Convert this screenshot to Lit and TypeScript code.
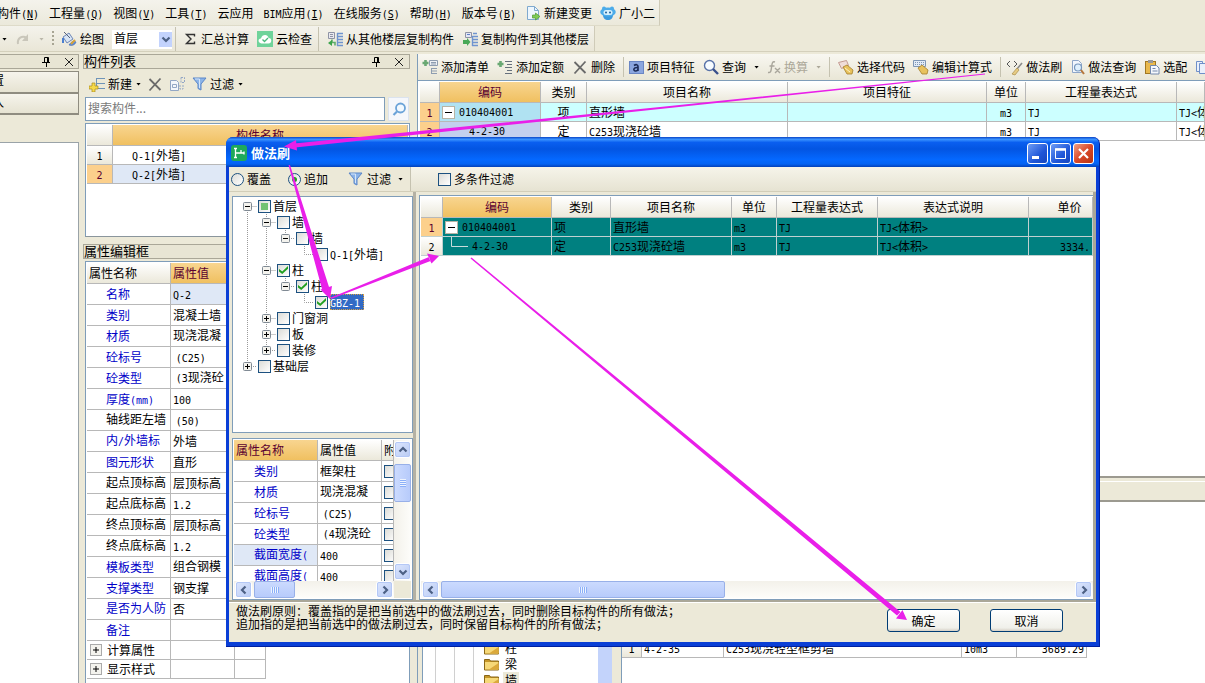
import { LitElement, html, svg, css, nothing, type TemplateResult } from 'lit';
import { customElement } from 'lit/decorators.js';
import { classMap } from 'lit/directives/class-map.js';

/* Latin runs are set in a half-width face so that they line up with the full-width characters. */
const t = (s: string) =>
  s.split(/([\x21-\x7e]+)/).filter((p) => p).map((p) => (/^[\x21-\x7e]/.test(p) ? html`<span class="l">${p}</span>` : p));

const shared = css`
  * { box-sizing: border-box; }
  button { font: inherit; color: inherit; background: none; border: 0; padding: 0; margin: 0; white-space: nowrap; }
  svg { display: block; flex: none; }
  .l { font-family: "DejaVu Sans Mono", "Liberation Mono", monospace; font-size: 10px; line-height: 1; }
  .tb { display: flex; align-items: center; gap: 3px; flex: none; }
  .tb.off { color: #aca899; }
  .caret { width: 5px; height: 3px; background: currentColor; clip-path: polygon(0 0, 100% 0, 50% 100%); margin-left: 5px; flex: none; }
  .sep { width: 1px; align-self: stretch; background: #c5c2b0; flex: none; }
  table { border-collapse: separate; border-spacing: 0; table-layout: fixed; width: 100%; }
  th, td { border-right: 1px solid #b8b8b8; border-bottom: 1px solid #b8b8b8; height: 19px; padding: 0 2px; font-weight: normal; text-align: left; white-space: nowrap; overflow: hidden; line-height: 16px; }
  th { height: 21px; background: linear-gradient(#fff, #ebe8da); padding: 0; text-align: center; }
  th.hot { background: linear-gradient(#f8d590, #f0c060); color: #5a0030; }
  th.left { text-align: left; padding-left: 2px; }
  td.num { background: linear-gradient(#fff, #ebe8da); text-align: center; padding: 0; }
  td.num.hot { background: #fcd08c; color: #5a0030; }
  td.c { text-align: center; }
  td.r { text-align: right; }
  .tall td { height: 21px; }
  .tall td.high { padding-bottom: 3px; }
  .name { color: #0000c8; }
  .name.plain { color: #000; }
  .code { display: flex; align-items: center; gap: 4px; }
  .code .l { padding-top: 2px; }
  .fold { width: 13px; height: 13px; flex: none; background: #fff; border: 1px solid #b8b4a4; display: flex; align-items: center; justify-content: center; }
  .fold::before { content: ""; width: 7px; height: 1px; background: #000; }
  input[type="checkbox"] { appearance: none; margin: 0; width: 13px; height: 13px; flex: none; border: 1px solid #1c5180; background: linear-gradient(135deg, #dcdcd7, #fff); display: grid; place-items: center; }
  input[type="checkbox"]:checked::after { content: ""; width: 9px; height: 8px; background: #21a121; clip-path: polygon(0 38%, 36% 68%, 100% 0, 100% 35%, 36% 100%, 0 68%); }
  input[type="checkbox"].part::after { content: ""; width: 7px; height: 7px; background: #73c373; }
`;

const ic = (body: TemplateResult, w = 16, h = 16) =>
  html`<svg width=${w} height=${h} viewBox="0 0 ${w} ${h}" fill="none" aria-hidden="true">${body}</svg>`;

const icons = {
  redo: ic(svg`<path d="M2 12C1 6 6 3 11 6" stroke="#c9c6ba" stroke-width="2"/><path d="M12 2v7H6z" fill="#c9c6ba"/>`, 14, 14),
  draw: ic(svg`<path d="M2 6l6-4 4 6-6 4z" fill="#d7e4f5" stroke="#6f87b5"/><path d="M3 1l6 6" stroke="#55617a"/><path d="M2 7v5" stroke="#4b7fd0" stroke-width="2"/><path d="M8 14c2-3 5-5 7-3-1 3-4 4-7 3z" fill="#5f8fdd" stroke="#3a62aa" stroke-width=".6"/><path d="M14 9l-4 4" stroke="#d7a33a" stroke-width="2"/>`),
  sigma: ic(svg`<path d="M10.500 5.500V3.500H2.500l4.500 4.500-4.500 4.500h8v-2" stroke="#333" stroke-width="1.400"/>`, 14, 16),
  cloudCheck: ic(svg`<rect width="16" height="16" fill="#6fd39a"/><path d="M4.500 12.500C0 11.500 1.500 7 4 7.500 5 3 11 3 11.500 7 15.500 7 15 12.500 11.500 12.500z" fill="#fff"/><path d="M5.500 8.500l2 2 3.500-3.500" stroke="#49b97a" stroke-width="1.300"/>`),
  copyFrom: ic(svg`<path d="M1.500 1.500h6v6h-6z" fill="#e9e9ef" stroke="#8f93a5"/><path d="M3 3.500h3M3 5.500h3" stroke="#8f93a5"/><path d="M10.500 2v13M10 2.500h6M10 5.500h6M10 8.500h6M10 11.500h6M10 14.500h6" stroke="#6f94cf" stroke-width="1.400"/><path d="M5 8.500v3M5 11.500h3v3" stroke="#5fae6a" stroke-width="1.600"/><path d="M1 12l4-3v6z" fill="#3ba34a"/>`),
  copyTo: ic(svg`<path d="M3.500 1.500h6v5h-6z" fill="#e3e6f4" stroke="#8f93a5"/><path d="M5 3.500h3" stroke="#5f7fc5"/><path d="M10.500 5v10M10 5.500h6M10 8.500h6M10 11.500h6M10 14.500h6M11 2.500h4" stroke="#6f94cf" stroke-width="1.400"/><path d="M1 9h4V7l3.500 4L5 15v-2H1z" fill="#49a857"/>`),
  newDoc: ic(svg`<path d="M1.500 1.500h7l4 4v9h-11z" fill="#edf6fd" stroke="#7fa9cf"/><path d="M8.500 1.500v4h4" stroke="#7fa9cf"/><path d="M6.500 10h3V8l4.500 3.500L9.500 15v-2h-3z" fill="#7ecb55" stroke="#4f9a33" stroke-width=".7"/>`, 15, 16),
  mascot: ic(svg`<path d="M3 10c0 3 2 5 5 5s5-2 5-5z" fill="#3b9ade"/><ellipse cx="8" cy="7" rx="7.800" ry="4.500" fill="#4cacea"/><circle cx="4" cy="3.500" r="2" fill="#4cacea"/><circle cx="12" cy="3.500" r="2" fill="#4cacea"/><rect x="3.500" y="5" width="9" height="5" rx="2.500" fill="#d5f0fd"/><circle cx="6" cy="7.500" r="1" fill="#1d5f9e"/><circle cx="10" cy="7.500" r="1" fill="#1d5f9e"/>`),
  pin: ic(svg`<path d="M3.500 1.500h4v5h-4zM1 6.500h8M5.500 7v4M6.500 2v4" stroke="#000"/>`, 10, 12),
  close: ic(svg`<path d="M1 1l8 8M9 1l-8 8" stroke="#222"/>`, 10, 10),
  create: ic(svg`<path d="M7 2.500h9M7 7.500h9M7 12.500h9M7.500 2v11" stroke="#6f94b8"/><path d="M3 7h3v3h3v3H6v3H3v-3H0v-3h3z" fill="#f5d94b" stroke="#a98a1e" stroke-width=".7"/>`),
  cross: ic(svg`<path d="M2.500 2l11 11M13.500 1.500l-11 12" stroke="#6a6a6a" stroke-width="1.800"/>`, 16, 15),
  copy: ic(svg`<path d="M1.500 4.500h6l2 2v8h-8z" fill="#f4f7fb" stroke="#93a7c5"/><path d="M3.500 8.500h4v3h-4z" stroke="#93a7c5"/><path d="M12 1.500h3.500v5H12zM11 9v4h3V9" stroke="#93a7c5" stroke-dasharray="2 1"/>`, 17, 16),
  funnel: ic(svg`<path d="M1 2h13L9 8v6l-3-1.500V8z" fill="#8cb4e8" stroke="#5a86c8"/><path d="M3 3h4.500L7.500 8v4" stroke="#d5e6fa"/>`, 15, 16),
  find: ic(svg`<circle cx="8.500" cy="6" r="4.500" fill="#f2f9ff" stroke="#6ba3d8" stroke-width="1.800"/><path d="M5 9.500L1.500 13" stroke="#6ba3d8" stroke-width="2.200"/>`, 14, 15),
  addList: ic(svg`<path d="M3.500 1v6M.5 4h6" stroke="#69a873" stroke-width="2.600"/><path d="M7.500 1.500h8v5h-8z" fill="#eef1f5" stroke="#8e9db0"/><path d="M9 3.500h5M9 5h5M9 9.500h6M9 12h6M9 14.500h6M9.500 9v6" stroke="#8e9db0"/>`),
  addItem: ic(svg`<path d="M3.500 2v6M.5 5h6" stroke="#69a873" stroke-width="2.600"/><path d="M8 2.500h7M10 5.500h5M8 8.500h7M10 11.500h5M8 14.500h7" stroke="#66707c"/>`),
  feature: ic(svg`<rect x=".5" y="1.500" width="14" height="12" fill="#8ba6df" stroke="#6a86c4"/><path d="M5 5.500c2-1.500 4-1 4 1V11M9 7.500c-5-.5-5 3.500-2.500 3.500C8 11 9 10 9 9" stroke="#1b2a55" stroke-width="1.600"/>`, 15, 15),
  query: ic(svg`<circle cx="6.500" cy="6.500" r="5" fill="#f6fbff" stroke="#5872a8" stroke-width="1.400"/><path d="M10 10l5 5" stroke="#39508c" stroke-width="2.400"/>`),
  fx: ic(svg`<path d="M8 2C5 1 5 4 4.500 7.500S4 13 1 12.500M2.500 6h5M8 8l5 5M13 8l-5 5" stroke="#a9a69c" stroke-width="1.400"/>`, 14, 15),
  pick: ic(svg`<path d="M.5 3.500l8-2 2 5-7 3z" fill="#f0ddd9" stroke="#c49a92"/><path d="M5 8l4-2 6 5-1 4H9z" fill="#e8c25d" stroke="#a57f2b" stroke-width=".8"/><path d="M7 9l5 4" stroke="#fff3c4"/>`),
  edit: ic(svg`<path d="M.5 1.500h12v6H.5z" fill="#e2ebf6" stroke="#7f97b5"/><path d="M2 3.500h9M2 5.500h9" stroke="#7f97b5" stroke-dasharray="1 1"/><path d="M5 9l4-3 6 5-1 4H9z" fill="#e8c25d" stroke="#a57f2b" stroke-width=".8"/>`),
  brush: ic(svg`<path d="M4 2L1 5l3 3M8 2l3 3-3 3" stroke="#555"/><path d="M16 4l-5 6" stroke="#8a8a8a" stroke-width="1.600"/><path d="M11 9l2 2-4 5-3-1z" fill="#e6cb83" stroke="#a98c4b" stroke-width=".7"/>`, 17, 17),
  docFind: ic(svg`<path d="M2.500 1.500h6l3 3v9h-9z" fill="#f1f6fd" stroke="#8ea6c9"/><circle cx="8" cy="8.500" r="3.500" fill="#dff0fd" stroke="#7797bd" stroke-width="1.200"/><path d="M11 11l3 4" stroke="#b5763c" stroke-width="2"/>`, 15, 16),
  paste: ic(svg`<rect x="1.500" y="2.500" width="10" height="12" fill="#e9b94d" stroke="#a17822"/><rect x="4" y="1" width="5" height="3" fill="#9a9a9a"/><path d="M6.500 6.500h6l2.500 2.500v6H6.500z" fill="#f5f8fd" stroke="#7288ab"/><path d="M8.500 9.500h3M8.500 12h5" stroke="#7288ab"/>`),
  sheet: ic(svg`<path d="M1.500 2.500h6v10h-6z" fill="#eaf0fb" stroke="#6f8fc9"/><path d="M4.500 4.500h8v10h-8z" fill="#eaf0fb" stroke="#6f8fc9"/>`),
  folder: ic(svg`<path d="M.5 2.500h5l1 1.500h8v9H.5z" fill="#c59628" stroke="#8a6716"/><path d="M1 5h13.500v7.500H1z" fill="#f6d878"/><path d="M14.500 6v6.500H5z" fill="#dba93b"/>`, 16, 14),
  app: ic(svg`<rect width="16" height="16" rx="3" fill="#1fa95b"/><path d="M4.500 3v10M4.500 8H13M10 8V5M3 3.500h3M3 12.500h3M13 6.500v3" stroke="#fff" stroke-width="1.300"/>`),
  left: ic(svg`<path d="M6.500 1.500L3 5l3.500 3.500" stroke="#4d6185" stroke-width="2.200"/>`, 10, 10),
  right: ic(svg`<path d="M3.500 1.500L7 5 3.500 8.500" stroke="#4d6185" stroke-width="2.200"/>`, 10, 10),
  up: ic(svg`<path d="M1.500 6.500L5 3l3.500 3.500" stroke="#4d6185" stroke-width="2.200"/>`, 10, 10),
  down: ic(svg`<path d="M1.500 3.500L5 7l3.500-3.500" stroke="#4d6185" stroke-width="2.200"/>`, 10, 10),
};

const caret = html`<span class="caret"></span>`;
const tool = (icon: TemplateResult, label: string, drop = false, off = false) =>
  html`<button class=${classMap({ tb: true, off })}>${icon}<span>${t(label)}</span>${drop ? caret : nothing}</button>`;

type Prop = { n: string; v: string; black?: boolean; nameHigh?: boolean; valueHigh?: boolean; lit?: 'n' | 'v' };

@customElement('scroll-bar')
class ScrollBar extends LitElement {
  static properties = { vertical: { type: Boolean, reflect: true } };
  declare vertical: boolean;
  static styles = [shared, css`
    :host { display: flex; height: 17px; background: linear-gradient(#f3f1ea, #fdfdfa); padding: 0 1px; gap: 1px; }
    :host([vertical]) { flex-direction: column; height: auto; width: 17px; padding: 1px 0; background: linear-gradient(90deg, #f3f1ea, #fdfdfa); }
    button { width: 17px; height: 17px; flex: none; display: grid; place-items: center; border: 1px solid #fff; outline: 1px solid #b4c8f6; outline-offset: -2px; border-radius: 3px; background: linear-gradient(135deg, #dce6fe, #b9cbf3); }
    .track { flex: 1; display: flex; flex-direction: inherit; padding: 0 1px; min-width: 0; min-height: 0; }
    :host([vertical]) .track { padding: 5px 0 0; }
    .thumb { width: var(--thumb, 50%); border: 1px solid #98b0e8; border-radius: 2px; background: linear-gradient(#cbdafe, #b7cbfb); display: grid; place-items: center; }
    :host([vertical]) .thumb { width: auto; height: var(--thumb, 50%); background: linear-gradient(90deg, #cbdafe, #b7cbfb); }
    .grip { width: 8px; height: 6px; background: repeating-linear-gradient(90deg, #eef4fe 0 1px, #8cb0f8 1px 2px); }
    :host([vertical]) .grip { width: 6px; height: 8px; background: repeating-linear-gradient(#eef4fe 0 1px, #8cb0f8 1px 2px); }
  `];
  render() {
    return html`
      <button aria-label="向前">${this.vertical ? icons.up : icons.left}</button>
      <div class="track"><div class="thumb"><span class="grip"></span></div></div>
      <button aria-label="向后">${this.vertical ? icons.down : icons.right}</button>`;
  }
}

type Node = { guides: string; join: 'down' | 'both' | 'up'; box: '+' | '-' | ''; label: string; state?: 'on' | 'part'; sel?: boolean };

const nodes: Node[] = [
  { guides: '', join: 'down', box: '-', label: '首层', state: 'part' },
  { guides: '|', join: 'both', box: '-', label: '墙' },
  { guides: '||', join: 'up', box: '-', label: '墙' },
  { guides: '|| ', join: 'up', box: '', label: 'Q-1[外墙]' },
  { guides: '|', join: 'both', box: '-', label: '柱', state: 'on' },
  { guides: '||', join: 'up', box: '-', label: '柱', state: 'on' },
  { guides: '|| ', join: 'up', box: '', label: 'GBZ-1', state: 'on', sel: true },
  { guides: '|', join: 'both', box: '+', label: '门窗洞' },
  { guides: '|', join: 'both', box: '+', label: '板' },
  { guides: '|', join: 'up', box: '+', label: '装修' },
  { guides: '', join: 'up', box: '+', label: '基础层' },
];

@customElement('brush-dialog')
class BrushDialog extends LitElement {
  static styles = [shared, css`
    :host { display: flex; flex-direction: column; background: #0a3fd6; border-radius: 7px 7px 0 0; padding: 0 3px 4px; border: solid #0020a0; border-width: 0 1px 1px 0; }
    .title { height: 30px; margin: 0 -3px; padding: 2px 5px 0; display: flex; align-items: center; gap: 4px; border-radius: 7px 7px 0 0; color: #fff; font-size: 13px; font-weight: bold; background: linear-gradient(#0a46c8, #3a93ff 8%, #0a5ff0 18%, #0355e2 40%, #0468ff 75%, #0462f2 90%, #0340b8); }
    .title h1 { font: inherit; margin: 0; flex: 1; }
    .win { width: 21px; height: 21px; border: 1px solid #fff; border-radius: 3px; background: linear-gradient(135deg, #6e9cf5, #1f56d8 60%, #1746bd); display: grid; place-items: center; }
    .win.x { background: linear-gradient(135deg, #f0a084, #d9492a 50%, #b9330f); }
    .controls { display: flex; gap: 2px; }
    .bar { height: 25px; display: flex; align-items: center; background: linear-gradient(#f6f4ea, #e6e3d2); border-bottom: 1px solid #d2ceb9; }
    .modes { width: 182px; align-self: stretch; display: flex; align-items: center; padding-left: 2px; background: #ece9d8; border-right: 1px solid #c5c2b0; }
    label { display: flex; align-items: center; gap: 3px; }
    .modes label { margin-right: 17px; }
    .modes .tb { margin-left: 3px; gap: 4px; }
    .modes .caret { margin-left: 3px; }
    input[type="radio"] { appearance: none; margin: 0; width: 13px; height: 13px; border: 1px solid #1c5180; border-radius: 50%; background: linear-gradient(135deg, #dcdcd7, #fff); display: grid; place-items: center; }
    input[type="radio"]:checked::after { content: ""; width: 5px; height: 5px; border-radius: 50%; background: #21a121; }
    .multi { margin-left: 27px; }
    .work { flex: 1; display: flex; min-height: 0; background: #ece9d8; border: solid #aaa798; border-width: 0 3px 2px 0; }
    .side { width: 187px; flex: none; padding: 4px 0 0 3px; border-right: 3px solid #b4b1a4; display: flex; flex-direction: column; gap: 5px; }
    .tree { height: 237px; background: #fff; border: 1px solid #7f9db9; padding: 1px 0 0 5px; }
    .node { display: flex; align-items: center; height: 16px; line-height: 16px; }
    .node label { gap: 2px; padding-left: 1px; }
    .node .sel { background: #316ac5; color: #fff; outline: 1px dotted #d8a040; outline-offset: -1px; padding: 0 4px 0 0; height: 16px; }
    .props { flex: 1; min-height: 0; background: #fff; border: 1px solid #7f9db9; display: grid; grid-template: 1fr 17px / 1fr 17px; padding: 1px; overflow: hidden; }
    .clip { overflow: hidden; min-height: 0; min-width: 0; }
    .clip td:last-child { padding-right: 0; }
    .corner { background: #ece9d8; }
    .vbar { --thumb: 38px; }
    .hbar { --thumb: 41px; }
    .main { flex: 1; min-width: 0; margin: 3px 0 0 3px; background: #fff; border: 1px solid #7f9db9; border-right: 0; padding: 1px 0 1px 1px; display: flex; flex-direction: column; }
    .main table { flex: none; }
    .main td { background: #008080; border-color: #c0d0d0; }
    .main td.num { background: linear-gradient(#fff, #ebe8da); }
    .main td.num.hot { background: #fcd08c; }
    .main td.code-cell { padding-left: 2px; }
    .fill { flex: 1; }
    .widebar { --thumb: 45%; }
    footer { height: 40px; background: #ece9d8; border-top: 1px solid #fff; display: flex; padding: 1px 33px 0 7px; gap: 30px; }
    footer p { margin: 0; flex: 1; line-height: 13px; white-space: nowrap; }
    .push { width: 73px; height: 23px; margin-top: 5px; border: 1px solid #003c74; border-radius: 3px; background: linear-gradient(#fff, #f0f0ea 85%, #d6d0c5); }
  `];

  private cell(kind: string, box: string) {
    const line = { '|': 'M9.5 0V16', down: 'M9.5 8V16M9.5 8.5H19', both: 'M9.5 0V16M9.5 8.5H19', up: 'M9.5 0V8.5H19' }[kind];
    return html`<svg width="19" height="16" viewBox="0 0 19 16" fill="none" aria-hidden="true">
      ${line ? svg`<path d=${line} stroke="#9a9a9a" stroke-dasharray="1 1"/>` : nothing}
      ${box ? svg`<rect x="5.500" y="4.500" width="8" height="8" rx="1" fill="#f4f3ee" stroke="#808a94"/><path d=${box === '+' ? 'M7 8.500h5M9.500 6v5' : 'M7 8.500h5'} stroke="#000"/>` : nothing}
    </svg>`;
  }

  private props: Prop[] = [
    { n: '类别', v: '框架柱' },
    { n: '材质', v: '现浇混凝', valueHigh: true },
    { n: '砼标号', v: ' (C25)' },
    { n: '砼类型', v: ' (4现浇砼', valueHigh: true },
    { n: '截面宽度(', v: '400', nameHigh: true, lit: 'n' },
    { n: '截面高度(', v: '400', nameHigh: true },
  ];

  render() {
    return html`
      <div class="title">${icons.app}<h1>做法刷</h1>
        <div class="controls">
          <button class="win" aria-label="最小化">${ic(svg`<path d="M2 11.500h7" stroke="#fff" stroke-width="3"/>`, 15, 15)}</button>
          <button class="win" aria-label="最大化">${ic(svg`<path d="M2.500 3h10v9.500h-10z" stroke="#fff"/><path d="M2 3.500h11" stroke="#fff" stroke-width="2.500"/>`, 15, 15)}</button>
          <button class="win x" aria-label="关闭">${ic(svg`<path d="M3 3l9 9M12 3l-9 9" stroke="#fff" stroke-width="2.200"/>`, 15, 15)}</button>
        </div>
      </div>
      <div class="bar">
        <div class="modes">
          <label><input type="radio" name="mode">覆盖</label>
          <label><input type="radio" name="mode" checked>追加</label>
          ${tool(icons.funnel, '过滤', true)}
        </div>
        <label class="multi"><input type="checkbox">多条件过滤</label>
      </div>
      <div class="work">
        <div class="side">
          <div class="tree">
            ${nodes.map((n) => html`<div class="node">
              ${[...n.guides].map((g) => this.cell(g, ''))}${this.cell(n.join, n.box)}
              <label><input type="checkbox" class=${n.state === 'part' ? 'part' : ''} ?checked=${n.state === 'on'}><span class=${n.sel ? 'sel' : ''}>${t(n.label)}</span></label>
            </div>`)}
          </div>
          <div class="props">
            <div class="clip">
              <table class="tall">
                <colgroup><col style="width:84px"><col style="width:64px"><col></colgroup>
                <tr><th class="hot left">属性名称</th><th class="left">属性值</th><th class="left">附</th></tr>
                ${this.props.map((p) => propRow(p, 'dlg'))}
              </table>
            </div>
            <scroll-bar class="vbar" vertical></scroll-bar>
            <scroll-bar class="hbar"></scroll-bar>
            <div class="corner"></div>
          </div>
        </div>
        <div class="main">
          <table>
            <colgroup><col style="width:22px"><col style="width:109px"><col style="width:59px"><col style="width:121px"><col style="width:45px"><col style="width:101px"><col><col style="width:64px"></colgroup>
            <tr><th></th><th class="hot">编码</th><th>类别</th><th>项目名称</th><th>单位</th><th>工程量表达式</th><th>表达式说明</th><th>&emsp;&ensp;单价</th></tr>
            <tr><td class="num hot">${t('1')}</td><td class="code-cell"><div class="code"><span class="fold"></span>${t('010404001')}</div></td><td>项</td><td>直形墙</td><td>${t('m3')}</td><td>${t('TJ')}</td><td>${t('TJ<体积>')}</td><td></td></tr>
            <tr><td class="num">${t('2')}</td><td class="code-cell"><div class="code">${ic(svg`<path d="M6.500 0V9.500H23" stroke="#c8dcdc"/>`, 23, 18)}${t('4-2-30')}</div></td><td>定</td><td>${t('C253现浇砼墙')}</td><td>${t('m3')}</td><td>${t('TJ')}</td><td>${t('TJ<体积>')}</td><td class="r">${t('3334.')}</td></tr>
          </table>
          <div class="fill"></div>
          <scroll-bar class="widebar"></scroll-bar>
        </div>
      </div>
      <footer>
        <p>做法刷原则：覆盖指的是把当前选中的做法刷过去，同时删除目标构件的所有做法；<br>追加指的是把当前选中的做法刷过去，同时保留目标构件的所有做法；</p>
        <button class="push">确定</button>
        <button class="push">取消</button>
      </footer>`;
  }
}

function propRow(p: Prop, kind: 'dlg' | 'panel') {
  return html`<tr>
    <td class=${classMap({ name: true, plain: !!p.black, high: !!p.nameHigh, lit: p.lit === 'n' })} style="padding-left:${kind === 'dlg' ? 20 : 19}px;${p.lit === 'n' ? 'background:#dfe8f6' : ''}">${t(p.n)}</td>
    <td class=${classMap({ high: !!p.valueHigh })} style=${p.lit === 'v' ? 'background:#dfe8f6' : ''}>${p.v.startsWith(' ') ? html`&nbsp;` : nothing}${t(p.v.trim())}</td>
    <td>${kind === 'dlg' ? html`<input type="checkbox" aria-label=${p.n}>` : nothing}</td></tr>`;
}

const wallProps: Prop[] = [
  { n: '名称', v: 'Q-2', lit: 'v' },
  { n: '类别', v: '混凝土墙' },
  { n: '材质', v: '现浇混凝', valueHigh: true },
  { n: '砼标号', v: ' (C25)' },
  { n: '砼类型', v: ' (3现浇砼', valueHigh: true },
  { n: '厚度(mm)', v: '100' },
  { n: '轴线距左墙', v: ' (50)', black: true, nameHigh: true },
  { n: '内/外墙标', v: '外墙', nameHigh: true },
  { n: '图元形状', v: '直形' },
  { n: '起点顶标高', v: '层顶标高', black: true, nameHigh: true },
  { n: '起点底标高', v: '1.2', black: true, nameHigh: true },
  { n: '终点顶标高', v: '层顶标高', black: true, nameHigh: true },
  { n: '终点底标高', v: '1.2', black: true, nameHigh: true },
  { n: '模板类型', v: '组合钢模', valueHigh: true },
  { n: '支撑类型', v: '钢支撑' },
  { n: '是否为人防', v: '否', nameHigh: true },
  { n: '备注', v: '' },
];

@customElement('app-root')
class AppRoot extends LitElement {
  static styles = [shared, css`
    :host { display: flex; flex-direction: column; position: relative; height: 100vh; overflow: hidden; background: #ece9d8; color: #000; font: 12px/16px "Noto Sans CJK SC", sans-serif; }
    .menu { height: 26px; width: 663px; display: flex; align-items: center; gap: 10px; margin-left: -3px; border-right: 1px solid #cfcbb8; border-bottom: 1px solid #dedbc9; background: linear-gradient(#f4f3ec, #ebe9db); white-space: nowrap; }
    .menu .tb:last-child { margin-left: -2px; }
    .key { text-decoration: underline; }
    .tools { height: 26px; width: 595px; display: flex; align-items: center; padding: 1px 0 1px 2px; border-right: 1px solid #cfcbb8; background: linear-gradient(#f4f3ec, #e9e6d6); }
    .tools .caret { margin: 0; }
    .tools .gray { color: #bab7aa; margin-left: 9px; }
    .tools .redo { margin-left: 9px; }
    .grip { width: 2px; height: 16px; margin: 0 7px 0 8px; background: repeating-linear-gradient(#a8a594 0 2px, transparent 2px 4px); }
    .combo { display: grid; width: 60px; height: 19px; background: #fff; margin: 0 3px 0 8px; }
    .combo > * { grid-area: 1 / 1; }
    .combo select { appearance: none; border: 0; background: none; font: inherit; padding: 0 0 0 2px; margin: 0; line-height: 16px; height: 17px; width: 60px; }
    .arrow { justify-self: end; align-self: center; width: 13px; height: 15px; background: #c3d3fd; display: grid; place-items: center; pointer-events: none; }
    .gap8 { margin-left: 8px; }
    .gap6 { margin-left: 6px; }
    .body { flex: 1; display: flex; min-height: 0; padding-top: 2px; border-top: 1px solid #d4d0bc; margin-top: -1px; }
    .panel-head { height: 15px; flex: none; display: flex; align-items: center; gap: 13px; padding-right: 5px; border: 1px solid #aaa798; background: #e8e5d4; }
    .panel-head h2 { font: inherit; font-size: 13px; line-height: 12px; height: 13px; margin: 0; flex: 1; }
    .strip { width: 79px; flex: none; display: flex; flex-direction: column; }
    .strip .panel-head { justify-content: flex-end; border-left: 0; padding-right: 4px; }
    .tab { height: 22px; margin-top: 2px; background: linear-gradient(#f6f4ec, #e6e3d2); border: solid #8f8c80; border-width: 1px 1px 1px 0; overflow: hidden; }
    .tab + .tab { margin-top: 0; border-bottom-width: 2px; }
    .tab span { margin-left: -8px; }
    .canvas { flex: 1; margin-top: 27px; background: #fff; border: solid #9aa3a8; border-width: 1px 1px 0 0; }
    .list { width: 327px; flex: none; margin-left: 4px; display: flex; flex-direction: column; }
    .list-tools { height: 26px; margin-top: 2px; display: flex; align-items: center; padding-left: 6px; gap: 6px; }
    .list-tools .caret { margin-left: 1px; }
    .search { display: flex; gap: 3px; margin-left: 2px; }
    .search input { width: 300px; height: 24px; border: 1px solid #7f9db9; padding: 0 2px 4px; font: inherit; background: #fff; }
    .search input::placeholder { color: #7a7a7a; opacity: 1; }
    .search button { width: 21px; height: 24px; display: grid; place-items: center; background: #f5f7fb; border: 1px solid #dbe3ee; }
    .box { margin-left: 2px; background: #fff; border: solid #7f9db9; border-width: 1px 1px 0 1px; padding: 1px; }
    .parts { height: 114px; flex: none; margin: 2px 0 7px 2px; border-bottom: 1px solid #8a959c; }
    .parts td.item { padding-left: 19px; }
    .parts tr:last-child td.item { background: #dfe8f6; }
    .attrs { flex: 1; min-height: 0; overflow: hidden; margin-top: 2px; }
    .attrs table { width: 179px; }
    .group td { height: 19px; }
    .group td:first-child { padding-left: 3px; }
    .group .row { display: flex; align-items: center; gap: 5px; }
    .content { flex: 1; min-width: 0; margin-left: 7px; display: flex; flex-direction: column; border-left: 1px solid #7f9db9; }
    .main-tools { height: 26px; flex: none; display: flex; align-items: center; gap: 8px; padding-left: 4px; overflow: hidden; background: linear-gradient(#f8f7f1, #e9e6d6); }
    .main-tools .sep { margin: 3px 0; }
    .main-tools .tight { margin-left: -3px; }
    .quota { flex: 1; background: #fff; border-top: 1px solid #7f9db9; padding: 1px 0 0 2px; overflow: hidden; }
    .quota .first td { background: #ccffff; }
    .quota .first td.code-cell { background: #b0e2f2; }
    .quota td.code-cell { background: #c3d0ee; }
    .quota td.num, .quota .first td.num { background: #fcd08c; }
    .quota tr td:nth-child(3) { text-align: center; }
    .indent { width: 23px; flex: none; }
    .splitter { height: 26px; flex: none; background: #ece9d8; border: solid #9c9a90; border-width: 2px 0; display: flex; flex-direction: column; padding-top: 3px; }
    .splitter::before { content: ""; height: 1px; background: #fff; }
    .lower { height: 181px; flex: none; display: flex; overflow: hidden; }
    .chapters { width: 190px; padding: 138px 0 0 28px; margin-left: 4px; background: repeating-linear-gradient(90deg, transparent 0 18px, #d0d0d0 18px 19px) -6px 0 / 66px no-repeat #fff; border-left: 1px solid #7f9db9; border-right: 14px solid #c3d3fb; }
    .leaf { display: flex; align-items: center; gap: 3px; height: 16px; padding-left: 33px; }
    .leaf span { padding: 0 2px; }
    .leaf.on span { background: #ece9d8; }
    .norms { flex: 1; min-width: 0; margin-left: 9px; background: #fff; border-left: 1px solid #7f9db9; padding-top: 137px; }
    .norms table { width: 465px; }
    brush-dialog { position: absolute; left: 226px; right: 105px; top: 137px; height: 510px; }
    .marks { position: absolute; inset: 0; pointer-events: none; }
  `];

  private menuItem(label: string, key = '') {
    return html`<button class="tb"><span>${t(label)}${key ? html`<span class="l">(<span class="key">${key}</span>)</span>` : nothing}</span></button>`;
  }

  render() {
    return html`
      <nav class="menu">
        ${this.menuItem('构件', 'N')}${this.menuItem('工程量', 'Q')}${this.menuItem('视图', 'V')}${this.menuItem('工具', 'T')}
        ${this.menuItem('云应用')}${this.menuItem('BIM应用', 'I')}${this.menuItem('在线服务', 'S')}${this.menuItem('帮助', 'H')}${this.menuItem('版本号', 'B')}
        ${tool(icons.newDoc, '新建变更')}${tool(icons.mascot, '广小二')}
      </nav>
      <div class="tools">
        ${caret}<button class="redo" aria-label="重做">${icons.redo}</button><span class="caret gray"></span>
        <span class="grip"></span>
        ${tool(icons.draw, '绘图')}
        <div class="combo"><select aria-label="楼层"><option>首层</option></select><span class="arrow">${icons.down}</span></div>
        <span class="sep"></span>
        <span class="gap8">${tool(icons.sigma, '汇总计算')}</span><span class="gap8">${tool(icons.cloudCheck, '云检查')}</span>
        <span class="sep gap6"></span>
        <span class="gap8">${tool(icons.copyFrom, '从其他楼层复制构件')}</span><span class="gap8">${tool(icons.copyTo, '复制构件到其他楼层')}</span>
      </div>
      <div class="body">
        <aside class="strip">
          <div class="panel-head">${icons.pin}${icons.close}</div>
          <div class="tab"><span>置</span></div>
          <div class="tab"><span>入</span></div>
          <div class="canvas"></div>
        </aside>
        <section class="list">
          <div class="panel-head"><h2>构件列表</h2>${icons.pin}${icons.close}</div>
          <div class="list-tools">
            ${tool(icons.create, '新建', true)}
            <button aria-label="删除">${icons.cross}</button><button aria-label="复制">${icons.copy}</button>
            ${tool(icons.funnel, '过滤', true)}
          </div>
          <div class="search"><input type="text" placeholder="搜索构件..." aria-label="搜索构件"><button aria-label="搜索">${icons.find}</button></div>
          <div class="box parts">
            <table>
              <colgroup><col style="width:26px"><col></colgroup>
              <tr><th></th><th class="hot">构件名称</th></tr>
              <tr><td class="num">${t('1')}</td><td class="item">${t('Q-1[外墙]')}</td></tr>
              <tr><td class="num hot">${t('2')}</td><td class="item">${t('Q-2[外墙]')}</td></tr>
            </table>
          </div>
          <div class="panel-head"><h2>属性编辑框</h2></div>
          <div class="box attrs">
            <table class="tall">
              <colgroup><col style="width:84px"><col style="width:64px"><col></colgroup>
              <tr><th class="left">属性名称</th><th class="hot left">属性值</th><th></th></tr>
              ${wallProps.map((p) => propRow(p, 'panel'))}
            </table>
            <table class="group">
              <colgroup><col style="width:84px"><col style="width:64px"><col></colgroup>
              ${['计算属性', '显示样式'].map((g) => html`<tr><td><div class="row">${ic(svg`<rect x=".5" y=".5" width="11" height="11" fill="#f4f3ee" stroke="#aaa"/><path d="M3 6h6M6 3v6" stroke="#000"/>`, 12, 12)}${g}</div></td><td></td><td></td></tr>`)}
            </table>
          </div>
        </section>
        <main class="content">
          <div class="main-tools">
            ${tool(icons.addList, '添加清单')}${tool(icons.addItem, '添加定额')}${tool(icons.cross, '删除')}
            <span class="sep"></span>
            <span class="tight">${tool(icons.feature, '项目特征')}</span>${tool(icons.query, '查询', true)}${tool(icons.fx, '换算', true, true)}
            <span class="sep"></span>
            ${tool(icons.pick, '选择代码')}${tool(icons.edit, '编辑计算式')}
            <span class="sep"></span>
            <span class="tight">${tool(icons.brush, '做法刷')}</span>${tool(icons.docFind, '做法查询')}${tool(icons.paste, '选配')}
            <button class="tb" aria-label="更多">${icons.sheet}</button>
          </div>
          <div class="quota">
            <table>
              <colgroup><col style="width:20px"><col style="width:101px"><col style="width:46px"><col style="width:201px"><col><col style="width:39px"><col style="width:151px"><col style="width:28px"></colgroup>
              <tr><th></th><th class="hot">编码</th><th>类别</th><th>项目名称</th><th>项目特征</th><th>单位</th><th>工程量表达式</th><th></th></tr>
              <tr class="first"><td class="num hot">${t('1')}</td><td class="code-cell"><div class="code"><span class="fold"></span>${t('010404001')}</div></td><td>项</td><td>直形墙</td><td></td><td class="c">${t('m3')}</td><td>${t('TJ')}</td><td>${t('TJ<体')}</td></tr>
              <tr><td class="num hot">${t('2')}</td><td class="code-cell"><div class="code"><span class="indent"></span>${t('4-2-30')}</div></td><td>定</td><td>${t('C253现浇砼墙')}</td><td></td><td class="c">${t('m3')}</td><td>${t('TJ')}</td><td>${t('TJ<体')}</td></tr>
            </table>
          </div>
          <div class="splitter"></div>
          <div class="lower">
            <div class="chapters">
              ${['柱', '梁', '墙'].map((n) => html`<div class="leaf ${n === '墙' ? 'on' : ''}">${icons.folder}<span>${n}</span></div>`)}
            </div>
            <div class="norms">
              <table>
                <colgroup><col style="width:20px"><col style="width:82px"><col style="width:238px"><col style="width:55px"><col></colgroup>
                <tr><td class="num">${t('1')}</td><td>${t('4-2-35')}</td><td>${t('C253现浇轻型框剪墙')}</td><td>${t('10m3')}</td><td class="r">${t('3689.29')}</td></tr>
              </table>
            </div>
          </div>
        </main>
      </div>
      <brush-dialog role="dialog" aria-label="做法刷"></brush-dialog>
      <svg class="marks" width="1205" height="683" viewBox="0 0 1205 683" fill="#e91fe9" aria-hidden="true">
        <path d="M985 73.500v1L660 109 295 147.500 294 143.500 660 107z"/><path d="M284 146.500L296 140 297 150.500z"/>
        <path d="M288.500 165h1.500L329 287 322 289zM330 299L320.500 289.500 332 286z"/>
        <path d="M331 297.500L429 257 430.500 261 331 299zM439 256L427 253.500 431.500 263.500z"/>
        <path d="M470.500 258.500L897 615.500 900.500 612 471.500 257.500zM907 620L896 618.500 902.500 610z"/>
      </svg>`;
  }
}
